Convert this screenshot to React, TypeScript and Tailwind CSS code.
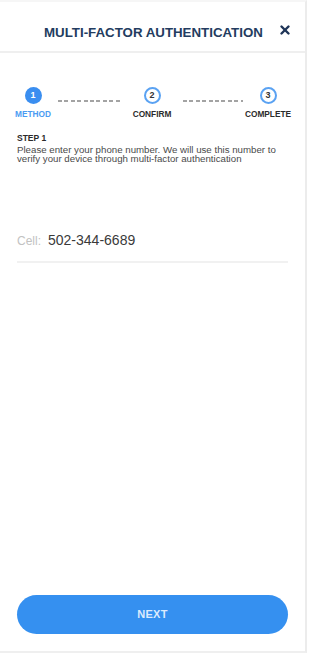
import { X } from 'lucide-react'

const steps = [
  { n: 1, label: 'METHOD', active: true },
  { n: 2, label: 'CONFIRM', active: false },
  { n: 3, label: 'COMPLETE', active: false },
]

function StepCircle({ n, active }: { n: number; active: boolean }) {
  return active ? (
    <div className="w-[17px] h-[17px] rounded-full bg-[#3a8ef0] flex items-center justify-center text-white text-[9px] font-bold leading-none">
      {n}
    </div>
  ) : (
    <div className="w-[17px] h-[17px] rounded-full border-2 border-[#5aa2f2] bg-white flex items-center justify-center text-[#333] text-[9px] font-bold leading-none">
      {n}
    </div>
  )
}

function Dashes({ short }: { short?: boolean }) {
  return (
    <div
      className={`${short ? 'w-[60px]' : 'w-[63px]'} h-[2px] mt-[13px] bg-[repeating-linear-gradient(90deg,#a3a3a3_0_4px,transparent_4px_6.4px)]`}
    />
  )
}

export default function App() {
  return (
    <div className="w-[309px] h-[654px] bg-white font-['Liberation_Sans',Arial,sans-serif]">
      <div className="w-[307px] h-[653px] flex flex-col border-t-2 border-r-2 border-b-2 border-t-[#f6f6f6] border-r-[#ececec] border-b-[#efefef]">
        {/* Header */}
        <div className="h-[51px] shrink-0 flex items-center border-b-2 border-[#efefef] pl-[44px] pr-[13px] pt-[12px]">
          <h1 className="text-[13.3px] font-bold text-[#233c60] whitespace-nowrap">
            MULTI-FACTOR AUTHENTICATION
          </h1>
          <X className="ml-auto -mt-[5px] text-[#1f3558]" size={14} strokeWidth={4.2} />
        </div>

        {/* Stepper */}
        <div className="flex items-start pl-[8px] pt-[34px]">
          {steps.map((s, i) => (
            <div key={s.n} className="flex items-start">
              {i > 0 && <Dashes short={i === 2} />}
              <div
                className={`${i === 1 ? 'w-[62px]' : 'w-[50px]'} flex flex-col items-center`}
              >
                <StepCircle n={s.n} active={s.active} />
                <span
                  className={`mt-[6px] text-[8.3px] font-bold leading-none whitespace-nowrap ${
                    s.active ? 'text-[#4b9bf2]' : 'text-[#2b2b2b]'
                  }`}
                >
                  {s.label}
                </span>
              </div>
            </div>
          ))}
        </div>

        {/* Step text */}
        <div className="px-[17px] pt-[16px]">
          <p className="text-[8.5px] font-bold text-[#2a2a2a] leading-none">STEP 1</p>
          <p className="mt-[2px] text-[9.7px] leading-[9.3px] text-[#4a4a4a]">
            Please enter your phone number. We will use this number to verify your device through multi-factor authentication
          </p>
        </div>

        {/* Cell input */}
        <div className="mx-[17px] mt-[67px] pb-[10px] border-b-2 border-[#f1f1f1] flex items-baseline gap-[7px]">
          <span className="text-[12px] text-[#c2c2c2]">Cell:</span>
          <span className="text-[14px] text-[#3a3a3a]">502-344-6689</span>
        </div>

        <div className="flex-1" />

        {/* Next button */}
        <div className="px-[17px] pb-[17px]">
          <button className="w-full h-[39px] rounded-full bg-[#3590f0] text-[#dcebfd] text-[11px] font-bold tracking-[0.3px]">
            NEXT
          </button>
        </div>
      </div>
    </div>
  )
}
